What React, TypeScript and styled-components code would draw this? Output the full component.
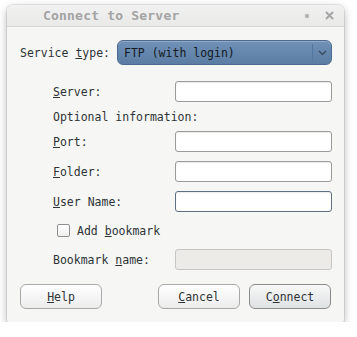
import React from 'react';
import styled, {createGlobalStyle} from "styled-components";

const GlobalStyle = createGlobalStyle`
    html, body {
        margin: 0;
        background: #ffffff;
    }
    body {
        font-family: 'DejaVu Sans Mono', 'Liberation Mono', monospace;
        font-size: 11.5px;
        color: #2e3436;
    }
`

const Page = styled.div`
    padding: 5px 0 0 7px;
`

const Window = styled.div`
    width: 337px;
    height: 317px;
    background: #f6f6f5;
    border-radius: 6px 6px 2px 2px;
    box-shadow: 0 0 0 1px rgba(0, 0, 0, 0.07), 0 3px 8px rgba(0, 0, 0, 0.3);
    display: flex;
    flex-direction: column;
    overflow: hidden;
`

const TitleBar = styled.div`
    height: 21px;
    flex-shrink: 0;
    display: flex;
    align-items: center;
    padding: 0 10px 0 36px;
    background: linear-gradient(#f1f1f1, #e9e9e8);
    border-bottom: 1px solid #d7d7d5;
`

const Title = styled.span`
    flex: 1;
    font-size: 13px;
    font-weight: bold;
    color: #a3a3a3;
    letter-spacing: 0.2px;
`

const TitleIcons = styled.div`
    display: flex;
    align-items: center;
    gap: 15px;
`

const Content = styled.div`
    flex: 1;
    display: flex;
    flex-direction: column;
    padding: 13px 12px 13px 13px;
    white-space: nowrap;
`

const ServiceRow = styled.div`
    display: flex;
    align-items: center;
    height: 25px;
`

const ServiceLabel = styled.span`
    width: 97px;
`

const Combo = styled.div`
    flex: 1;
    height: 25px;
    box-sizing: border-box;
    display: flex;
    align-items: center;
    border: 1px solid #4d6b90;
    border-radius: 6px;
    background: linear-gradient(#7191b7, #5b7da4);
    box-shadow: inset 0 1px 0 rgba(255, 255, 255, 0.22);
    color: #141a22;
`

const ComboText = styled.span`
    flex: 1;
    padding-left: 6px;
`

const ComboArrow = styled.span`
    width: 18px;
    height: 17px;
    display: flex;
    align-items: center;
    justify-content: center;
    border-left: 1px solid #56779d;
`

const Form = styled.div`
    display: flex;
    flex-direction: column;
    gap: 9px;
    margin-top: 16px;
    padding-left: 33px;
`

const Row = styled.div<{ $h?: number }>`
    display: flex;
    align-items: center;
    height: ${p => p.$h ?? 21}px;
`

const Label = styled.span`
    width: 122px;
`

const Input = styled.div<{ $focus?: boolean; $disabled?: boolean }>`
    width: 157px;
    height: 21px;
    box-sizing: border-box;
    border-radius: 3px;
    border: 1px solid ${p => p.$focus ? '#5f6f80' : p.$disabled ? '#c8c6c2' : '#9b9b9b'};
    background: ${p => p.$disabled ? '#edebe8' : '#ffffff'};
    box-shadow: ${p => p.$disabled ? 'none' : 'inset 0 1px 1px rgba(0,0,0,0.08)'};
`

const CheckLabel = styled.label`
    display: flex;
    align-items: center;
    gap: 7px;
    padding-left: 4px;
`

const CheckBox = styled.span`
    width: 11px;
    height: 11px;
    border: 1px solid #8f8f8f;
    border-radius: 2px;
    background: linear-gradient(#ffffff, #f0f0f0);
`

const Buttons = styled.div`
    display: flex;
    gap: 9px;
    margin-top: 14px;
`

const Button = styled.button<{ $default?: boolean }>`
    width: 82px;
    height: 25px;
    border-radius: 6px;
    border: 1px solid ${p => p.$default ? '#8a8a8a' : '#a8a8a8'};
    background: ${p => p.$default ? 'linear-gradient(#f8f8f8, #dfe1e3)' : 'linear-gradient(#ffffff, #ececec)'};
    font-family: inherit;
    font-size: inherit;
    color: #2e3436;
    padding: 0;
    &:first-child {
        margin-right: 47px;
    }
`

const U = styled.span`
    text-decoration: underline;
`

export default function App() {
    return (
        <Page>
            <GlobalStyle/>
            <Window>
                <TitleBar>
                    <Title>Connect to Server</Title>
                    <TitleIcons>
                        <svg width="6" height="6" viewBox="0 0 6 6">
                            <circle cx="3" cy="3" r="2.2" fill="#b4b4b4"/>
                        </svg>
                        <svg width="9" height="9" viewBox="0 0 9 9">
                            <path d="M1 1L8 8M8 1L1 8" stroke="#a6a6a6" strokeWidth="2"/>
                        </svg>
                    </TitleIcons>
                </TitleBar>
                <Content>
                    <ServiceRow>
                        <ServiceLabel>Service <U>t</U>ype:</ServiceLabel>
                        <Combo>
                            <ComboText>FTP (with login)</ComboText>
                            <ComboArrow>
                                <svg width="9" height="6" viewBox="0 0 9 6">
                                    <path d="M1 1L4.5 4.5L8 1" stroke="#3c4a5c" strokeWidth="1.4" fill="none"/>
                                </svg>
                            </ComboArrow>
                        </Combo>
                    </ServiceRow>
                    <Form>
                        <Row>
                            <Label><U>S</U>erver:</Label>
                            <Input/>
                        </Row>
                        <Row $h={11}>
                            <Label>Optional information:</Label>
                        </Row>
                        <Row>
                            <Label><U>P</U>ort:</Label>
                            <Input/>
                        </Row>
                        <Row>
                            <Label><U>F</U>older:</Label>
                            <Input/>
                        </Row>
                        <Row>
                            <Label><U>U</U>ser Name:</Label>
                            <Input $focus/>
                        </Row>
                        <Row $h={19}>
                            <CheckLabel>
                                <CheckBox/>
                                <span>Add <U>b</U>ookmark</span>
                            </CheckLabel>
                        </Row>
                        <Row>
                            <Label>Bookmark <U>n</U>ame:</Label>
                            <Input $disabled/>
                        </Row>
                    </Form>
                    <Buttons>
                        <Button><U>H</U>elp</Button>
                        <Button><U>C</U>ancel</Button>
                        <Button $default>C<U>o</U>nnect</Button>
                    </Buttons>
                </Content>
            </Window>
        </Page>
    );
}
